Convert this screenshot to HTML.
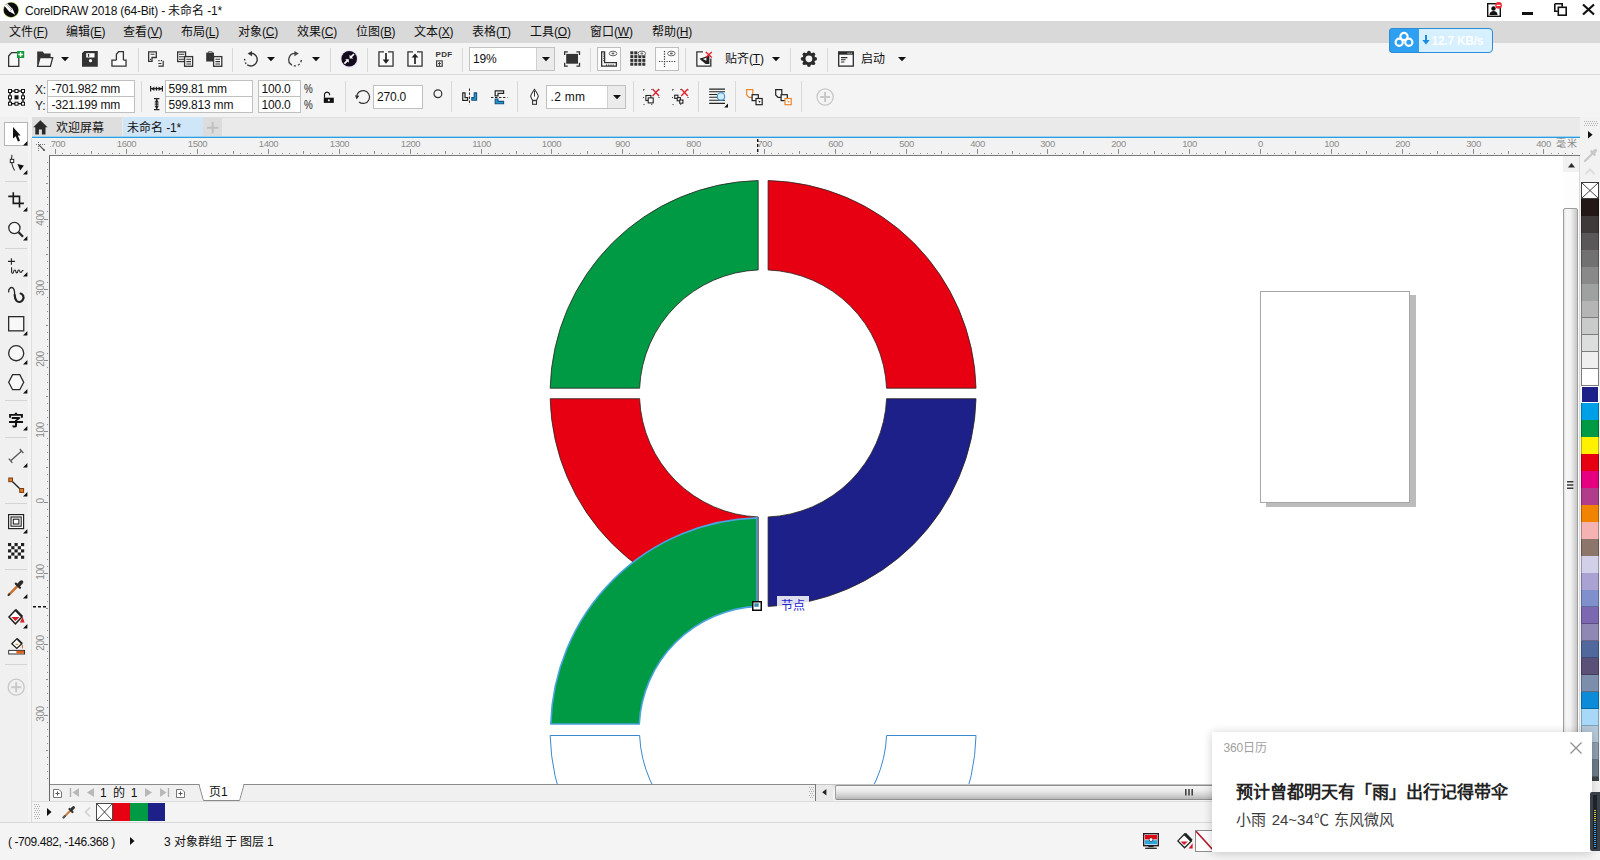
<!DOCTYPE html>
<html lang="zh-CN"><head><meta charset="utf-8"><title>CorelDRAW 2018 (64-Bit)</title>
<style>
*{box-sizing:border-box;margin:0;padding:0}
html,body{width:1600px;height:860px;overflow:hidden;background:#f4f4f4}
body{position:relative;font-family:"Liberation Sans",sans-serif;font-size:12px;color:#111;line-height:1;letter-spacing:-0.2px}
.a{position:absolute}
.t{position:absolute;white-space:nowrap;line-height:1}
.cj{display:inline-block;white-space:nowrap;letter-spacing:0}
u{text-decoration:underline;text-underline-offset:1px}
.sep{position:absolute;width:1px;background:#d9d9d9}
.fld{position:absolute;background:#fff;border:1px solid #c6c6c6}
svg{position:absolute;overflow:visible}
</style></head>
<body>
<div class="a" style="left:0px;top:117px;width:32px;height:706px;background:#f0f0f0"></div><div class="a" style="left:28px;top:117px;width:4px;height:706px;background:#f4f4f4"></div><div class="a" style="left:4px;top:122px;width:24px;height:24px;background:#fff;border:1px solid #b4b4b4"></div><svg style="left:12.8px;top:126.8px" width="8" height="15" viewBox="0 0 8 15"><path d="M0 0V11.6L2.7 9.2L4.9 14.6L7 13.7L4.8 8.5H7.6Z" fill="#111"/></svg><svg style="left:22.6px;top:140.6px" width="4.4" height="4.4" viewBox="0 0 4.4 4.4"><path d="M4.4 0V4.4H0Z" fill="#111"/></svg><svg style="left:9px;top:154px" width="16" height="18" viewBox="0 0 16 18"><path d="M3 0.8C1.8 6 3 12 5.6 16.6" fill="none" stroke="#333" stroke-width="1.1"/><rect x="1.3" y="5.3" width="3.4" height="3.3" fill="#fff" stroke="#222" stroke-width="1"/><path d="M8.4 10L14.9 11.4L11.2 16.6Z" fill="#111"/></svg><svg style="left:22.6px;top:169.6px" width="4.4" height="4.4" viewBox="0 0 4.4 4.4"><path d="M4.4 0V4.4H0Z" fill="#111"/></svg><div class="a" style="left:5px;top:181px;width:22px;height:1px;background:#d4d4d4"></div><svg style="left:8px;top:192px" width="16" height="16" viewBox="0 0 16 16"><path d="M5.3 0.2V11.4H15.9M0.3 4.4H11.5V15.6" fill="none" stroke="#1a1a1a" stroke-width="1.6"/></svg><svg style="left:22.6px;top:206.6px" width="4.4" height="4.4" viewBox="0 0 4.4 4.4"><path d="M4.4 0V4.4H0Z" fill="#111"/></svg><svg style="left:8px;top:221px" width="17" height="17" viewBox="0 0 17 17"><circle cx="6.4" cy="7" r="5.6" fill="#f8f8f8" stroke="#2b2b2b" stroke-width="1.3"/><path d="M10.6 11.2L15 15.8" stroke="#222" stroke-width="2.2"/></svg><svg style="left:22.6px;top:235.6px" width="4.4" height="4.4" viewBox="0 0 4.4 4.4"><path d="M4.4 0V4.4H0Z" fill="#111"/></svg><div class="a" style="left:5px;top:248px;width:22px;height:1px;background:#d4d4d4"></div><svg style="left:7px;top:258px" width="18" height="16" viewBox="0 0 18 16"><path d="M4.4 0.2V6.7M1 3.4H8" stroke="#222" stroke-width="1.1"/><path d="M4.6 9.3V13.6C4.6 15.8 6.4 15.8 6.6 13.8C6.8 11.4 8.6 11.4 8.8 13.4C9 15.4 10.6 15.4 10.8 13.4C11 11.6 12.6 11.6 12.8 13.2C13 14.8 14.6 14.8 15 13.2C15.2 12.4 15.8 12.2 16.4 12.8" fill="none" stroke="#222" stroke-width="1.1"/></svg><svg style="left:22.6px;top:272.4px" width="4.4" height="4.4" viewBox="0 0 4.4 4.4"><path d="M4.4 0V4.4H0Z" fill="#111"/></svg><svg style="left:8px;top:286px" width="17" height="18" viewBox="0 0 17 18"><path d="M0.7 5.8C0.2 2.6 3 0.5 5 2C7.4 3.9 6.2 8.6 7 12" fill="none" stroke="#222" stroke-width="1.3" stroke-linecap="round"/><path d="M6.6 9C6.8 11 7.2 13 8.4 14.6C10.2 16.8 13.6 16.4 15 13.6C16.3 11 14.9 8 12.6 7.5" fill="none" stroke="#222" stroke-width="2.2" stroke-linecap="round"/></svg><svg style="left:7.8px;top:316.2px" width="16.4" height="15.5" viewBox="0 0 16.4 15.5"><rect x="0.65" y="0.65" width="15.1" height="14.2" fill="#f8f8f8" stroke="#2b2b2b" stroke-width="1.3"/></svg><svg style="left:22.6px;top:330.6px" width="4.4" height="4.4" viewBox="0 0 4.4 4.4"><path d="M4.4 0V4.4H0Z" fill="#111"/></svg><svg style="left:7.8px;top:344.8px" width="16.4" height="16.4" viewBox="0 0 16.4 16.4"><circle cx="8.2" cy="8.2" r="7.55" fill="#f8f8f8" stroke="#2b2b2b" stroke-width="1.3"/></svg><svg style="left:22.6px;top:359.6px" width="4.4" height="4.4" viewBox="0 0 4.4 4.4"><path d="M4.4 0V4.4H0Z" fill="#111"/></svg><svg style="left:7.8px;top:373.9px" width="16.4" height="16.4" viewBox="0 0 16.4 16.4"><path d="M4.6 0.7H11.8L15.7 8.2L11.8 15.7H4.6L0.7 8.2Z" fill="#f8f8f8" stroke="#2b2b2b" stroke-width="1.3"/></svg><svg style="left:22.6px;top:388.6px" width="4.4" height="4.4" viewBox="0 0 4.4 4.4"><path d="M4.4 0V4.4H0Z" fill="#111"/></svg><div class="a" style="left:5px;top:400px;width:22px;height:1px;background:#d4d4d4"></div><svg style="left:8.2px;top:411.5px" width="16" height="16" viewBox="0 0 16 16"><path d="M7 8.2V9.1H1V10.9H7V13.3C7 13.5 6.9 13.6 6.5 13.6C6.2 13.6 5 13.6 4 13.5C4.4 14 4.7 14.9 4.9 15.5C6.2 15.5 7.2 15.5 8 15.2C8.8 14.9 9 14.4 9 13.3V10.9H15V9.1H9V8.8C10.4 8 11.6 7 12.6 6L11.3 5L10.8 5.1H3.7V6.9H8.9C8.3 7.4 7.6 7.9 7 8.2ZM6.5 0.9C6.7 1.2 6.9 1.6 7.1 2H1.1V5.7H3V3.8H12.9V5.7H14.9V2H9.4C9.1 1.5 8.8 0.8 8.4 0.4Z" fill="#111"/></svg><svg style="left:22.6px;top:425.6px" width="4.4" height="4.4" viewBox="0 0 4.4 4.4"><path d="M4.4 0V4.4H0Z" fill="#111"/></svg><div class="a" style="left:5px;top:437px;width:22px;height:1px;background:#d4d4d4"></div><svg style="left:8px;top:448px" width="17" height="17" viewBox="0 0 17 17"><path d="M2.6 12.8L13.6 3" stroke="#555" stroke-width="1.2"/><path d="M0.8 10.6L4.4 14.8M11.8 1L15.4 5.2" stroke="#555" stroke-width="1.3"/></svg><svg style="left:22.6px;top:462.6px" width="4.4" height="4.4" viewBox="0 0 4.4 4.4"><path d="M4.4 0V4.4H0Z" fill="#111"/></svg><svg style="left:8px;top:477px" width="17" height="17" viewBox="0 0 17 17"><path d="M2.6 2.8L13.6 13.4" stroke="#222" stroke-width="1.4"/><rect x="0.8" y="1" width="3.7" height="3.7" fill="#e07b2c" stroke="#7a3c10" stroke-width="1"/><rect x="11.7" y="11.5" width="3.9" height="3.9" fill="#e07b2c" stroke="#7a3c10" stroke-width="1"/></svg><svg style="left:22.6px;top:491.6px" width="4.4" height="4.4" viewBox="0 0 4.4 4.4"><path d="M4.4 0V4.4H0Z" fill="#111"/></svg><div class="a" style="left:5px;top:503px;width:22px;height:1px;background:#d4d4d4"></div><svg style="left:7.9px;top:514.2px" width="16.2" height="15.2" viewBox="0 0 16.2 15.2"><rect x="0.6" y="0.6" width="15" height="14" fill="#fff" stroke="#222" stroke-width="1.2"/><rect x="3" y="3" width="10.2" height="9.2" fill="#fff" stroke="#222" stroke-width="1.1"/><rect x="5.3" y="5.2" width="5.6" height="4.8" fill="#fff" stroke="#222" stroke-width="1.1"/></svg><svg style="left:22.6px;top:528.6px" width="4.4" height="4.4" viewBox="0 0 4.4 4.4"><path d="M4.4 0V4.4H0Z" fill="#111"/></svg><svg style="left:7.9px;top:543.3px" width="16.2" height="15.8" viewBox="0 0 16.2 15.8"><rect x="0" y="0" width="16.2" height="15.8" fill="#fff"/><rect x="0" y="0" width="3.24" height="3.16" fill="#222"/><rect x="0" y="6.32" width="3.24" height="3.16" fill="#222"/><rect x="0" y="12.64" width="3.24" height="3.16" fill="#222"/><rect x="3.24" y="3.16" width="3.24" height="3.16" fill="#222"/><rect x="3.24" y="9.48" width="3.24" height="3.16" fill="#222"/><rect x="6.48" y="0" width="3.24" height="3.16" fill="#222"/><rect x="6.48" y="6.32" width="3.24" height="3.16" fill="#222"/><rect x="6.48" y="12.64" width="3.24" height="3.16" fill="#222"/><rect x="9.72" y="3.16" width="3.24" height="3.16" fill="#222"/><rect x="9.72" y="9.48" width="3.24" height="3.16" fill="#222"/><rect x="12.96" y="0" width="3.24" height="3.16" fill="#222"/><rect x="12.96" y="6.32" width="3.24" height="3.16" fill="#222"/><rect x="12.96" y="12.64" width="3.24" height="3.16" fill="#222"/></svg><div class="a" style="left:5px;top:569px;width:22px;height:1px;background:#d4d4d4"></div><svg style="left:7px;top:579px" width="18" height="18" viewBox="0 0 18 18"><path d="M2 15.6L10 7.6" stroke="#c8702c" stroke-width="2.4" stroke-linecap="round"/><path d="M1.4 16.2L2.4 15.2" stroke="#333" stroke-width="1.8" stroke-linecap="round"/><path d="M8.8 4.6L13 8.8" stroke="#2a2a2a" stroke-width="2.2" stroke-linecap="round"/><path d="M12 5.6L14.4 3.2" stroke="#2a2a2a" stroke-width="3.8" stroke-linecap="round"/></svg><svg style="left:22.6px;top:594.1px" width="4.4" height="4.4" viewBox="0 0 4.4 4.4"><path d="M4.4 0V4.4H0Z" fill="#111"/></svg><svg style="left:8px;top:609px" width="18" height="18" viewBox="0 0 18 18"><path d="M7.4 1.2L13.8 8L7.4 14.8L1 8Z" fill="#fff" stroke="#222" stroke-width="1.5"/><path d="M7.6 0.8L14.4 7.6" stroke="#222" stroke-width="2"/><path d="M3.2 8H11.6L7.4 12Z" fill="#d8202c"/><path d="M14.6 7.8L12 13.4H16.6Z" fill="#d8202c"/></svg><svg style="left:22.6px;top:623.6px" width="4.4" height="4.4" viewBox="0 0 4.4 4.4"><path d="M4.4 0V4.4H0Z" fill="#111"/></svg><svg style="left:7.5px;top:637.5px" width="17" height="17" viewBox="0 0 17 17"><path d="M8.8 0.9L13.8 5.8L8.8 10.4L3.8 5.8Z" fill="#fff" stroke="#222" stroke-width="1.3"/><path d="M9 0.6L14.2 5.6" stroke="#222" stroke-width="1.6"/><path d="M6.6 5.8H11L9 7.6Z" fill="#c8a040"/><path d="M14.4 7V10.4" stroke="#d06020" stroke-width="1"/><rect x="0.7" y="12.4" width="15.8" height="3.6" fill="#fff" stroke="#333" stroke-width="1"/><rect x="8.4" y="12.9" width="7.6" height="2.6" fill="#e0601c"/></svg><div class="a" style="left:5px;top:664px;width:22px;height:1px;background:#d4d4d4"></div><svg style="left:6.8px;top:678.3px" width="19" height="19" viewBox="0 0 19 19"><circle cx="9.2" cy="9.2" r="8" fill="none" stroke="#c8c8c8" stroke-width="1.3"/><path d="M9.2 4.2V14.2M4.2 9.2H14.2" stroke="#c8c8c8" stroke-width="2"/></svg>
<div class="a" style="left:49px;top:155px;width:1514px;height:629px;background:#fff;border-left:1px solid #666;border-top:1px solid #787878"></div><svg style="left:50px;top:156px;overflow:hidden" width="1513" height="628" viewBox="50 156 1513 628"><rect x="1266" y="295" width="150" height="212" fill="#bcbcbc"/><rect x="1260.5" y="291.5" width="149" height="211" fill="#fff" stroke="#a6a6a6" stroke-width="1"/><path d="M550.16 388.20 A213 213 0 0 1 758.20 180.51 L758.20 269.95 A123.6 123.6 0 0 0 639.61 388.20 Z" fill="#009944" stroke="#2a2320" stroke-width="0.8"/><path d="M976.04 388.20 A213 213 0 0 0 768.10 180.51 L768.10 269.95 A123.6 123.6 0 0 1 886.59 388.20 Z" fill="#e60012" stroke="#2a2320" stroke-width="0.8"/><path d="M550.16 398.70 A213 213 0 0 0 758.20 606.39 L758.20 516.95 A123.6 123.6 0 0 1 639.61 398.70 Z" fill="#e60012" stroke="#2a2320" stroke-width="0.8"/><path d="M976.04 398.70 A213 213 0 0 1 768.10 606.39 L768.10 516.95 A123.6 123.6 0 0 0 886.59 398.70 Z" fill="#1d2088" stroke="#2a2320" stroke-width="0.8"/><path d="M550.79 724.00 A212.4 212.4 0 0 1 757.00 517.89 L757.00 606.35 A124 124 0 0 0 639.26 724.00 Z" fill="#009944" stroke="#4aa3dc" stroke-width="1.6"/><path d="M550.17 735.50 A213 213 0 0 0 758.20 943.14 L758.20 853.70 A123.6 123.6 0 0 1 639.61 735.50 Z" fill="none" stroke="#3b88cc" stroke-width="1"/><path d="M976.03 735.50 A213 213 0 0 1 768.10 943.14 L768.10 853.70 A123.6 123.6 0 0 0 886.59 735.50 Z" fill="none" stroke="#3b88cc" stroke-width="1"/><rect x="752.75" y="601.75" width="8.5" height="8.5" fill="#fff" stroke="#0a0a0a" stroke-width="1.5"/><rect x="754.3" y="603.3" width="4.4" height="3.5" fill="#3a8cb0"/></svg><div class="a" style="left:777px;top:596px;width:32px;height:15px;background:rgba(255,255,255,.85)"></div><div class="t" style="left:780.5px;top:599.5px;font-size:12px;color:#2323d6;"><span class="cj" style="width:24px">节点</span></div>
<div class="a" style="left:32px;top:138px;width:1548px;height:17px;background:#f2f2f2"></div><svg style="left:0px;top:0px" width="1600" height="160" viewBox="0 0 1600 160"><path d="M55.5 149V154M62.5 153V154M70.5 153V154M77.5 153V154M84.5 153V154M91.5 151V154M98.5 153V154M105.5 153V154M112.5 153V154M119.5 153V154M126.5 149V154M133.5 153V154M140.5 153V154M147.5 153V154M155.5 153V154M162.5 151V154M169.5 153V154M176.5 153V154M183.5 153V154M190.5 153V154M197.5 149V154M204.5 153V154M211.5 153V154M218.5 153V154M225.5 153V154M233.5 151V154M240.5 153V154M247.5 153V154M254.5 153V154M261.5 153V154M268.5 149V154M275.5 153V154M282.5 153V154M289.5 153V154M296.5 153V154M303.5 151V154M310.5 153V154M318.5 153V154M325.5 153V154M332.5 153V154M339.5 149V154M346.5 153V154M353.5 153V154M360.5 153V154M367.5 153V154M374.5 151V154M381.5 153V154M388.5 153V154M396.5 153V154M403.5 153V154M410.5 149V154M417.5 153V154M424.5 153V154M431.5 153V154M438.5 153V154M445.5 151V154M452.5 153V154M459.5 153V154M466.5 153V154M473.5 153V154M481.5 149V154M488.5 153V154M495.5 153V154M502.5 153V154M509.5 153V154M516.5 151V154M523.5 153V154M530.5 153V154M537.5 153V154M544.5 153V154M551.5 149V154M558.5 153V154M566.5 153V154M573.5 153V154M580.5 153V154M587.5 151V154M594.5 153V154M601.5 153V154M608.5 153V154M615.5 153V154M622.5 149V154M629.5 153V154M636.5 153V154M644.5 153V154M651.5 153V154M658.5 151V154M665.5 153V154M672.5 153V154M679.5 153V154M686.5 153V154M693.5 149V154M700.5 153V154M707.5 153V154M714.5 153V154M721.5 153V154M729.5 151V154M736.5 153V154M743.5 153V154M750.5 153V154M757.5 153V154M764.5 149V154M771.5 153V154M778.5 153V154M785.5 153V154M792.5 153V154M799.5 151V154M806.5 153V154M814.5 153V154M821.5 153V154M828.5 153V154M835.5 149V154M842.5 153V154M849.5 153V154M856.5 153V154M863.5 153V154M870.5 151V154M877.5 153V154M884.5 153V154M892.5 153V154M899.5 153V154M906.5 149V154M913.5 153V154M920.5 153V154M927.5 153V154M934.5 153V154M941.5 151V154M948.5 153V154M955.5 153V154M962.5 153V154M969.5 153V154M977.5 149V154M984.5 153V154M991.5 153V154M998.5 153V154M1005.5 153V154M1012.5 151V154M1019.5 153V154M1026.5 153V154M1033.5 153V154M1040.5 153V154M1047.5 149V154M1055.5 153V154M1062.5 153V154M1069.5 153V154M1076.5 153V154M1083.5 151V154M1090.5 153V154M1097.5 153V154M1104.5 153V154M1111.5 153V154M1118.5 149V154M1125.5 153V154M1132.5 153V154M1140.5 153V154M1147.5 153V154M1154.5 151V154M1161.5 153V154M1168.5 153V154M1175.5 153V154M1182.5 153V154M1189.5 149V154M1196.5 153V154M1203.5 153V154M1210.5 153V154M1217.5 153V154M1225.5 151V154M1232.5 153V154M1239.5 153V154M1246.5 153V154M1253.5 153V154M1260.5 149V154M1267.5 153V154M1274.5 153V154M1281.5 153V154M1288.5 153V154M1295.5 151V154M1303.5 153V154M1310.5 153V154M1317.5 153V154M1324.5 153V154M1331.5 149V154M1338.5 153V154M1345.5 153V154M1352.5 153V154M1359.5 153V154M1366.5 151V154M1373.5 153V154M1380.5 153V154M1388.5 153V154M1395.5 153V154M1402.5 149V154M1409.5 153V154M1416.5 153V154M1423.5 153V154M1430.5 153V154M1437.5 151V154M1444.5 153V154M1451.5 153V154M1458.5 153V154M1465.5 153V154M1473.5 149V154M1480.5 153V154M1487.5 153V154M1494.5 153V154M1501.5 153V154M1508.5 151V154M1515.5 153V154M1522.5 153V154M1529.5 153V154M1536.5 153V154M1543.5 149V154M1551.5 153V154M1558.5 153V154M1565.5 153V154M1572.5 153V154" stroke="#8c8c8c" stroke-width="1" fill="none" shape-rendering="crispEdges"/></svg><div class="a" style="left:50px;top:138px;width:1530px;height:17px;overflow:hidden"><div class="a" style="left:-50px;top:-138px"><div class="t" style="left:35.5px;top:139px;width:40px;text-align:center;font-size:9.5px;color:#8c8c8c;letter-spacing:-0.45px">1700</div><div class="t" style="left:106.5px;top:139px;width:40px;text-align:center;font-size:9.5px;color:#8c8c8c;letter-spacing:-0.45px">1600</div><div class="t" style="left:177.5px;top:139px;width:40px;text-align:center;font-size:9.5px;color:#8c8c8c;letter-spacing:-0.45px">1500</div><div class="t" style="left:248.5px;top:139px;width:40px;text-align:center;font-size:9.5px;color:#8c8c8c;letter-spacing:-0.45px">1400</div><div class="t" style="left:319.5px;top:139px;width:40px;text-align:center;font-size:9.5px;color:#8c8c8c;letter-spacing:-0.45px">1300</div><div class="t" style="left:390.5px;top:139px;width:40px;text-align:center;font-size:9.5px;color:#8c8c8c;letter-spacing:-0.45px">1200</div><div class="t" style="left:461.5px;top:139px;width:40px;text-align:center;font-size:9.5px;color:#8c8c8c;letter-spacing:-0.45px">1100</div><div class="t" style="left:531.5px;top:139px;width:40px;text-align:center;font-size:9.5px;color:#8c8c8c;letter-spacing:-0.45px">1000</div><div class="t" style="left:602.5px;top:139px;width:40px;text-align:center;font-size:9.5px;color:#8c8c8c;letter-spacing:-0.45px">900</div><div class="t" style="left:673.5px;top:139px;width:40px;text-align:center;font-size:9.5px;color:#8c8c8c;letter-spacing:-0.45px">800</div><div class="t" style="left:744.5px;top:139px;width:40px;text-align:center;font-size:9.5px;color:#8c8c8c;letter-spacing:-0.45px">700</div><div class="t" style="left:815.5px;top:139px;width:40px;text-align:center;font-size:9.5px;color:#8c8c8c;letter-spacing:-0.45px">600</div><div class="t" style="left:886.5px;top:139px;width:40px;text-align:center;font-size:9.5px;color:#8c8c8c;letter-spacing:-0.45px">500</div><div class="t" style="left:957.5px;top:139px;width:40px;text-align:center;font-size:9.5px;color:#8c8c8c;letter-spacing:-0.45px">400</div><div class="t" style="left:1027.5px;top:139px;width:40px;text-align:center;font-size:9.5px;color:#8c8c8c;letter-spacing:-0.45px">300</div><div class="t" style="left:1098.5px;top:139px;width:40px;text-align:center;font-size:9.5px;color:#8c8c8c;letter-spacing:-0.45px">200</div><div class="t" style="left:1169.5px;top:139px;width:40px;text-align:center;font-size:9.5px;color:#8c8c8c;letter-spacing:-0.45px">100</div><div class="t" style="left:1240.5px;top:139px;width:40px;text-align:center;font-size:9.5px;color:#8c8c8c;letter-spacing:-0.45px">0</div><div class="t" style="left:1311.5px;top:139px;width:40px;text-align:center;font-size:9.5px;color:#8c8c8c;letter-spacing:-0.45px">100</div><div class="t" style="left:1382.5px;top:139px;width:40px;text-align:center;font-size:9.5px;color:#8c8c8c;letter-spacing:-0.45px">200</div><div class="t" style="left:1453.5px;top:139px;width:40px;text-align:center;font-size:9.5px;color:#8c8c8c;letter-spacing:-0.45px">300</div><div class="t" style="left:1523.5px;top:139px;width:40px;text-align:center;font-size:9.5px;color:#8c8c8c;letter-spacing:-0.45px">400</div></div></div><svg style="left:757px;top:139px" width="2" height="15" viewBox="0 0 2 15"><path d="M0.7 0V15" stroke="#111" stroke-width="1.4" stroke-dasharray="3 2"/></svg><div class="t" style="left:1556px;top:139px;font-size:10px;color:#8c8c8c;"><span class="cj" style="width:22px;letter-spacing:1px">毫米</span></div>
<div class="a" style="left:32px;top:155px;width:17px;height:629px;background:#f2f2f2"></div><svg style="left:0px;top:0px" width="60" height="802" viewBox="0 0 60 802"><path d="M47 162.5H48M47 169.5H48M47 176.5H48M46 183.5H48M47 190.5H48M47 197.5H48M47 204.5H48M47 211.5H48M44 219.5H48M47 226.5H48M47 233.5H48M47 240.5H48M47 247.5H48M46 254.5H48M47 261.5H48M47 268.5H48M47 275.5H48M47 282.5H48M44 289.5H48M47 297.5H48M47 304.5H48M47 311.5H48M47 318.5H48M46 325.5H48M47 332.5H48M47 339.5H48M47 346.5H48M47 353.5H48M44 360.5H48M47 367.5H48M47 374.5H48M47 382.5H48M47 389.5H48M46 396.5H48M47 403.5H48M47 410.5H48M47 417.5H48M47 424.5H48M44 431.5H48M47 438.5H48M47 445.5H48M47 452.5H48M47 459.5H48M46 467.5H48M47 474.5H48M47 481.5H48M47 488.5H48M47 495.5H48M44 502.5H48M47 509.5H48M47 516.5H48M47 523.5H48M47 530.5H48M46 537.5H48M47 545.5H48M47 552.5H48M47 559.5H48M47 566.5H48M44 573.5H48M47 580.5H48M47 587.5H48M47 594.5H48M47 601.5H48M46 608.5H48M47 615.5H48M47 622.5H48M47 630.5H48M47 637.5H48M44 644.5H48M47 651.5H48M47 658.5H48M47 665.5H48M47 672.5H48M46 679.5H48M47 686.5H48M47 693.5H48M47 700.5H48M47 707.5H48M44 715.5H48M47 722.5H48M47 729.5H48M47 736.5H48M47 743.5H48M46 750.5H48M47 757.5H48M47 764.5H48M47 771.5H48M47 778.5H48M44 785.5H48M47 793.5H48" stroke="#8c8c8c" stroke-width="1" fill="none" shape-rendering="crispEdges"/></svg><div class="a" style="left:31px;top:138px;width:1px;height:663px;background:#dedede"></div><svg style="left:33px;top:606px" width="15" height="2" viewBox="0 0 15 2"><path d="M0 0.7H15" stroke="#111" stroke-width="1.4" stroke-dasharray="3 2"/></svg><div class="a" style="left:32px;top:156px;width:18px;height:628px;overflow:hidden"><div class="a" style="left:-32px;top:-156px"><div class="t" style="left:20.5px;top:212.5px;width:40px;height:10px;text-align:center;font-size:10px;color:#8c8c8c;letter-spacing:-0.45px;transform:rotate(-90deg)">400</div><div class="t" style="left:20.5px;top:282.5px;width:40px;height:10px;text-align:center;font-size:10px;color:#8c8c8c;letter-spacing:-0.45px;transform:rotate(-90deg)">300</div><div class="t" style="left:20.5px;top:353.5px;width:40px;height:10px;text-align:center;font-size:10px;color:#8c8c8c;letter-spacing:-0.45px;transform:rotate(-90deg)">200</div><div class="t" style="left:20.5px;top:424.5px;width:40px;height:10px;text-align:center;font-size:10px;color:#8c8c8c;letter-spacing:-0.45px;transform:rotate(-90deg)">100</div><div class="t" style="left:20.5px;top:495.5px;width:40px;height:10px;text-align:center;font-size:10px;color:#8c8c8c;letter-spacing:-0.45px;transform:rotate(-90deg)">0</div><div class="t" style="left:20.5px;top:566.5px;width:40px;height:10px;text-align:center;font-size:10px;color:#8c8c8c;letter-spacing:-0.45px;transform:rotate(-90deg)">100</div><div class="t" style="left:20.5px;top:637.5px;width:40px;height:10px;text-align:center;font-size:10px;color:#8c8c8c;letter-spacing:-0.45px;transform:rotate(-90deg)">200</div><div class="t" style="left:20.5px;top:708.5px;width:40px;height:10px;text-align:center;font-size:10px;color:#8c8c8c;letter-spacing:-0.45px;transform:rotate(-90deg)">300</div></div></div>
<div class="a" style="left:1563px;top:155px;width:17px;height:629px;background:#fdfdfd;border-top:1px solid #787878"></div><div class="a" style="left:1579px;top:156px;width:1px;height:628px;background:#dadada"></div><div class="a" style="left:1563px;top:156px;width:16px;height:16px;background:#f1f1f1"></div><svg style="left:1568px;top:163px" width="7" height="4.4" viewBox="0 0 7 4.4"><path d="M0 4.4L3.5 0L7 4.4Z" fill="#2a2a2a"/></svg><div class="a" style="left:1563px;top:208px;width:15px;height:556px;background:linear-gradient(90deg,#e4e4e4 0,#f6f6f6 20%,#f2f2f2 50%,#d8d8d8 80%,#c6c6c6 100%);border:1px solid #9c9c9c;border-radius:2px"></div><svg style="left:1567px;top:481px" width="6.4" height="8" viewBox="0 0 6.4 8"><path d="M0 0.8H6.4M0 4H6.4M0 7.2H6.4" stroke="#3a3a3a" stroke-width="1.5"/></svg>
<div class="a" style="left:1580px;top:117px;width:20px;height:706px;background:#f2f2f2"></div><div class="a" style="left:1581px;top:182px;width:18px;height:17px;background:#fff;border:1px solid #3c3c3c"></div><svg style="left:1581px;top:182px" width="18" height="17" viewBox="0 0 18 17"><path d="M1 1L17 16M17 1L1 16" stroke="#2a2a2a" stroke-width="0.9" fill="none"/></svg><div class="a" style="left:1581px;top:199px;width:18px;height:17px;background:#231815;border-left:1px solid rgba(0,0,0,.28);border-right:1px solid rgba(0,0,0,.28)"></div><div class="a" style="left:1581px;top:216px;width:18px;height:17px;background:#3e3a39;border-left:1px solid rgba(0,0,0,.28);border-right:1px solid rgba(0,0,0,.28)"></div><div class="a" style="left:1581px;top:233px;width:18px;height:17px;background:#595757;border-left:1px solid rgba(0,0,0,.28);border-right:1px solid rgba(0,0,0,.28)"></div><div class="a" style="left:1581px;top:250px;width:18px;height:17px;background:#727171;border-left:1px solid rgba(0,0,0,.28);border-right:1px solid rgba(0,0,0,.28)"></div><div class="a" style="left:1581px;top:267px;width:18px;height:17px;background:#898989;border-left:1px solid rgba(0,0,0,.28);border-right:1px solid rgba(0,0,0,.28)"></div><div class="a" style="left:1581px;top:284px;width:18px;height:17px;background:#9fa0a0;border-left:1px solid rgba(0,0,0,.28);border-right:1px solid rgba(0,0,0,.28)"></div><div class="a" style="left:1581px;top:301px;width:18px;height:17px;background:#b5b5b6;border:1px solid #7c7c7c;border-top:0"></div><div class="a" style="left:1581px;top:318px;width:18px;height:17px;background:#c9caca;border:1px solid #7c7c7c;border-top:0"></div><div class="a" style="left:1581px;top:335px;width:18px;height:17px;background:#dcdddd;border:1px solid #7c7c7c;border-top:0"></div><div class="a" style="left:1581px;top:352px;width:18px;height:17px;background:#efefef;border:1px solid #7c7c7c;border-top:0"></div><div class="a" style="left:1581px;top:369px;width:18px;height:17px;background:#ffffff;border:1px solid #7c7c7c;border-top:0"></div><div class="a" style="left:1581px;top:386px;width:18px;height:17px;background:#1d2088;border:1px solid #fff"></div><div class="a" style="left:1581px;top:403px;width:18px;height:17px;background:#00a0e9;border-left:1px solid rgba(0,0,0,.28);border-right:1px solid rgba(0,0,0,.28)"></div><div class="a" style="left:1581px;top:420px;width:18px;height:17px;background:#009944;border-left:1px solid rgba(0,0,0,.28);border-right:1px solid rgba(0,0,0,.28)"></div><div class="a" style="left:1581px;top:437px;width:18px;height:17px;background:#fff100;border-left:1px solid rgba(0,0,0,.28);border-right:1px solid rgba(0,0,0,.28)"></div><div class="a" style="left:1581px;top:454px;width:18px;height:17px;background:#e60012;border-left:1px solid rgba(0,0,0,.28);border-right:1px solid rgba(0,0,0,.28)"></div><div class="a" style="left:1581px;top:471px;width:18px;height:17px;background:#e4007f;border-left:1px solid rgba(0,0,0,.28);border-right:1px solid rgba(0,0,0,.28)"></div><div class="a" style="left:1581px;top:488px;width:18px;height:17px;background:#b23c8c;border-left:1px solid rgba(0,0,0,.28);border-right:1px solid rgba(0,0,0,.28)"></div><div class="a" style="left:1581px;top:505px;width:18px;height:17px;background:#f08300;border-left:1px solid rgba(0,0,0,.28);border-right:1px solid rgba(0,0,0,.28)"></div><div class="a" style="left:1581px;top:522px;width:18px;height:17px;background:#f5b2b2;border-left:1px solid rgba(0,0,0,.28);border-right:1px solid rgba(0,0,0,.28)"></div><div class="a" style="left:1581px;top:539px;width:18px;height:17px;background:#8c766c;border-left:1px solid rgba(0,0,0,.28);border-right:1px solid rgba(0,0,0,.28)"></div><div class="a" style="left:1581px;top:556px;width:18px;height:17px;background:#d2cfe8;border-left:1px solid rgba(0,0,0,.28);border-right:1px solid rgba(0,0,0,.28)"></div><div class="a" style="left:1581px;top:573px;width:18px;height:17px;background:#aaa2d2;border-left:1px solid rgba(0,0,0,.28);border-right:1px solid rgba(0,0,0,.28)"></div><div class="a" style="left:1581px;top:590px;width:18px;height:17px;background:#7f90cc;border:1px solid rgba(0,0,0,.25);border-top:0"></div><div class="a" style="left:1581px;top:607px;width:18px;height:17px;background:#7b68b0;border:1px solid rgba(0,0,0,.25);border-top:0"></div><div class="a" style="left:1581px;top:624px;width:18px;height:17px;background:#9088b4;border:1px solid rgba(0,0,0,.25);border-top:0"></div><div class="a" style="left:1581px;top:641px;width:18px;height:17px;background:#50689c;border:1px solid rgba(0,0,0,.25);border-top:0"></div><div class="a" style="left:1581px;top:658px;width:18px;height:17px;background:#5a5078;border:1px solid rgba(0,0,0,.25);border-top:0"></div><div class="a" style="left:1581px;top:675px;width:18px;height:17px;background:#7c8eac;border:1px solid rgba(0,0,0,.25);border-top:0"></div><div class="a" style="left:1581px;top:692px;width:18px;height:17px;background:#0c8cd8;border:1px solid rgba(0,0,0,.25);border-top:0"></div><div class="a" style="left:1581px;top:709px;width:18px;height:17px;background:#a8d8f8;border:1px solid rgba(0,0,0,.25);border-top:0"></div><div class="a" style="left:1581px;top:726px;width:18px;height:17px;background:#b4c8d8;border:1px solid rgba(0,0,0,.25);border-top:0"></div><div class="a" style="left:1581px;top:743px;width:18px;height:17px;background:#8e9fb0;border:1px solid rgba(0,0,0,.25);border-top:0"></div><div class="a" style="left:1581px;top:760px;width:18px;height:17px;background:#6c7c88;border:1px solid rgba(0,0,0,.25);border-top:0"></div><div class="a" style="left:1581px;top:777px;width:18px;height:4px;background:#3c4448"></div><svg style="left:1584px;top:121px" width="14" height="6" viewBox="0 0 14 6"><rect x="0" y="0" width="1" height="1" fill="#b0b0b0"/><rect x="2" y="0" width="1" height="1" fill="#b0b0b0"/><rect x="4" y="0" width="1" height="1" fill="#b0b0b0"/><rect x="6" y="0" width="1" height="1" fill="#b0b0b0"/><rect x="8" y="0" width="1" height="1" fill="#b0b0b0"/><rect x="10" y="0" width="1" height="1" fill="#b0b0b0"/><rect x="12" y="0" width="1" height="1" fill="#b0b0b0"/><rect x="1" y="2" width="1" height="1" fill="#b0b0b0"/><rect x="3" y="2" width="1" height="1" fill="#b0b0b0"/><rect x="5" y="2" width="1" height="1" fill="#b0b0b0"/><rect x="7" y="2" width="1" height="1" fill="#b0b0b0"/><rect x="9" y="2" width="1" height="1" fill="#b0b0b0"/><rect x="11" y="2" width="1" height="1" fill="#b0b0b0"/><rect x="13" y="2" width="1" height="1" fill="#b0b0b0"/><rect x="0" y="4" width="1" height="1" fill="#b0b0b0"/><rect x="2" y="4" width="1" height="1" fill="#b0b0b0"/><rect x="4" y="4" width="1" height="1" fill="#b0b0b0"/><rect x="6" y="4" width="1" height="1" fill="#b0b0b0"/><rect x="8" y="4" width="1" height="1" fill="#b0b0b0"/><rect x="10" y="4" width="1" height="1" fill="#b0b0b0"/><rect x="12" y="4" width="1" height="1" fill="#b0b0b0"/></svg><svg style="left:1588px;top:131.3px" width="5" height="8" viewBox="0 0 5 8"><path d="M0 0L4.6 3.7L0 7.4Z" fill="#111"/></svg><svg style="left:1583px;top:148px" width="15" height="15" viewBox="0 0 15 15"><path d="M2 13L9 6" stroke="#c8c8c8" stroke-width="2.2" stroke-linecap="round" fill="none"/><path d="M8.5 3.5L11.5 6.5" stroke="#c8c8c8" stroke-width="2.6" stroke-linecap="round"/><path d="M10.5 4.5L12.5 2.5" stroke="#c8c8c8" stroke-width="3.2" stroke-linecap="round"/></svg><svg style="left:1584px;top:167px" width="12" height="8" viewBox="0 0 12 8"><path d="M1.5 7L6 2.5L10.5 7" stroke="#dedede" stroke-width="2" fill="none"/></svg>
<div class="a" style="left:32px;top:784px;width:17px;height:17px;background:#f2f2f2"></div><div class="a" style="left:49px;top:784px;width:1px;height:17px;background:#6a6a6a"></div><div class="a" style="left:50px;top:784px;width:1530px;height:17px;background:#f0f0f0;border-top:1px solid #c4c4c4"></div><div class="a" style="left:50px;top:784px;width:766px;height:1px;background:#8a8a8a"></div><div class="a" style="left:32px;top:801px;width:1568px;height:1px;background:#dcdcdc"></div><svg style="left:53px;top:787px" width="9" height="11" viewBox="0 0 9 11"><path d="M0.5 2.5H6L8.5 5V10.5H0.5Z" fill="#fff" stroke="#777" stroke-width="1"/><path d="M2.5 6.5H6.5M4.5 4.5V8.5" stroke="#555" stroke-width="1"/></svg><svg style="left:69px;top:788px" width="10" height="9" viewBox="0 0 10 9"><path d="M1.5 0V9" stroke="#b0b0b0" stroke-width="1.4"/><path d="M10 0L3.5 4.5L10 9Z" fill="#b8b8b8"/></svg><svg style="left:86px;top:788px" width="8" height="9" viewBox="0 0 8 9"><path d="M8 0L1 4.5L8 9Z" fill="#b8b8b8"/></svg><div class="t" style="left:100px;top:787px;font-size:12px;color:#111;">1 <span class="cj" style="width:12px;margin:0 3px">的</span> 1</div><svg style="left:145px;top:788px" width="8" height="9" viewBox="0 0 8 9"><path d="M0 0L7 4.5L0 9Z" fill="#b8b8b8"/></svg><svg style="left:160px;top:788px" width="10" height="9" viewBox="0 0 10 9"><path d="M8.5 0V9" stroke="#b0b0b0" stroke-width="1.4"/><path d="M0 0L6.5 4.5L0 9Z" fill="#b8b8b8"/></svg><svg style="left:176px;top:787px" width="9" height="11" viewBox="0 0 9 11"><path d="M0.5 2.5H6L8.5 5V10.5H0.5Z" fill="#fff" stroke="#777" stroke-width="1"/><path d="M2.5 6.5H6.5M4.5 4.5V8.5" stroke="#555" stroke-width="1"/></svg><svg style="left:196px;top:784px" width="52" height="18" viewBox="0 0 52 18"><path d="M0 0.5H3L7.5 16.5H43.5L48 0.5H52" fill="none" stroke="#8a8a8a" stroke-width="1"/><path d="M3.5 0L8 16H43L47.5 0Z" fill="#fff"/></svg><div class="t" style="left:209px;top:786px;font-size:12px;color:#111;"><span class="cj" style="width:12px">页</span>1</div><svg style="left:809px;top:787px" width="5" height="12" viewBox="0 0 5 12"><rect x="0" y="0" width="1" height="1" fill="#b0b0b0"/><rect x="2" y="0" width="1" height="1" fill="#b0b0b0"/><rect x="4" y="0" width="1" height="1" fill="#b0b0b0"/><rect x="1" y="2" width="1" height="1" fill="#b0b0b0"/><rect x="3" y="2" width="1" height="1" fill="#b0b0b0"/><rect x="0" y="4" width="1" height="1" fill="#b0b0b0"/><rect x="2" y="4" width="1" height="1" fill="#b0b0b0"/><rect x="4" y="4" width="1" height="1" fill="#b0b0b0"/><rect x="1" y="6" width="1" height="1" fill="#b0b0b0"/><rect x="3" y="6" width="1" height="1" fill="#b0b0b0"/><rect x="0" y="8" width="1" height="1" fill="#b0b0b0"/><rect x="2" y="8" width="1" height="1" fill="#b0b0b0"/><rect x="4" y="8" width="1" height="1" fill="#b0b0b0"/><rect x="1" y="10" width="1" height="1" fill="#b0b0b0"/><rect x="3" y="10" width="1" height="1" fill="#b0b0b0"/></svg><div class="a" style="left:815px;top:784px;width:1px;height:17px;background:#777"></div><div class="a" style="left:816px;top:785px;width:17px;height:16px;background:#e9e9e9"></div><svg style="left:821.8px;top:788.8px" width="4.4" height="6.4" viewBox="0 0 4.4 6.4"><path d="M4.4 0L0.2 3.2L4.4 6.4Z" fill="#222"/></svg><div class="a" style="left:833px;top:785px;width:747px;height:16px;background:linear-gradient(#dcdcdc,#f6f6f6 45%,#f2f2f2)"></div><div class="a" style="left:835px;top:785px;width:706px;height:15px;background:linear-gradient(#f6f6f6 0,#ececec 35%,#d2d2d2 72%,#b6b6b6 100%);border:1px solid #8e8e8e;border-left-color:#a0a0a0;border-radius:2px"></div><svg style="left:1185px;top:789px" width="8" height="6.4" viewBox="0 0 8 6.4"><path d="M0.8 0V6.4M4 0V6.4M7.2 0V6.4" stroke="#3a3a3a" stroke-width="1.5"/></svg><div class="a" style="left:31px;top:801px;width:1px;height:22px;background:#dcdcdc"></div><svg style="left:34px;top:804px" width="6" height="16" viewBox="0 0 6 16"><rect x="0" y="0" width="1" height="1" fill="#b0b0b0"/><rect x="2" y="0" width="1" height="1" fill="#b0b0b0"/><rect x="4" y="0" width="1" height="1" fill="#b0b0b0"/><rect x="1" y="2" width="1" height="1" fill="#b0b0b0"/><rect x="3" y="2" width="1" height="1" fill="#b0b0b0"/><rect x="5" y="2" width="1" height="1" fill="#b0b0b0"/><rect x="0" y="4" width="1" height="1" fill="#b0b0b0"/><rect x="2" y="4" width="1" height="1" fill="#b0b0b0"/><rect x="4" y="4" width="1" height="1" fill="#b0b0b0"/><rect x="1" y="6" width="1" height="1" fill="#b0b0b0"/><rect x="3" y="6" width="1" height="1" fill="#b0b0b0"/><rect x="5" y="6" width="1" height="1" fill="#b0b0b0"/><rect x="0" y="8" width="1" height="1" fill="#b0b0b0"/><rect x="2" y="8" width="1" height="1" fill="#b0b0b0"/><rect x="4" y="8" width="1" height="1" fill="#b0b0b0"/><rect x="1" y="10" width="1" height="1" fill="#b0b0b0"/><rect x="3" y="10" width="1" height="1" fill="#b0b0b0"/><rect x="5" y="10" width="1" height="1" fill="#b0b0b0"/><rect x="0" y="12" width="1" height="1" fill="#b0b0b0"/><rect x="2" y="12" width="1" height="1" fill="#b0b0b0"/><rect x="4" y="12" width="1" height="1" fill="#b0b0b0"/><rect x="1" y="14" width="1" height="1" fill="#b0b0b0"/><rect x="3" y="14" width="1" height="1" fill="#b0b0b0"/><rect x="5" y="14" width="1" height="1" fill="#b0b0b0"/></svg><svg style="left:47px;top:808px" width="5" height="8" viewBox="0 0 5 8"><path d="M0 0L4.5 4L0 8Z" fill="#111"/></svg><svg style="left:62px;top:805px" width="14" height="14" viewBox="0 0 14 14"><path d="M1.5 12.5L8 6" stroke="#c87a3c" stroke-width="2" stroke-linecap="round"/><path d="M1.5 12.5L3 11" stroke="#555" stroke-width="2" stroke-linecap="round"/><path d="M7.5 4L10.5 7" stroke="#333" stroke-width="2.2" stroke-linecap="round"/><path d="M9.5 4.5L11.5 2.5" stroke="#333" stroke-width="3" stroke-linecap="round"/></svg><svg style="left:84px;top:807px" width="7" height="10" viewBox="0 0 7 10"><path d="M6 0.5L1.5 5L6 9.5" stroke="#d0d0d0" stroke-width="1.6" fill="none"/></svg><div class="a" style="left:96px;top:803px;width:17px;height:18px;background:#fff;border:1px solid #4a4a4a"></div><svg style="left:96px;top:803px" width="17" height="18" viewBox="0 0 17 18"><path d="M1 1L16 17M16 1L1 17" stroke="#333" stroke-width="0.9" fill="none"/></svg><div class="a" style="left:113px;top:803px;width:17px;height:18px;background:#e60012"></div><div class="a" style="left:130px;top:803px;width:18px;height:18px;background:#009944"></div><div class="a" style="left:148px;top:803px;width:17px;height:18px;background:#1d2088"></div><div class="a" style="left:0px;top:822px;width:1600px;height:1px;background:#d8d8d8"></div><div class="a" style="left:0px;top:823px;width:1600px;height:37px;background:#f4f4f4"></div><div class="t" style="left:8px;top:836px;font-size:12px;color:#111;letter-spacing:-0.42px">( -709.482, -146.368 )</div><svg style="left:130px;top:837px" width="5" height="8" viewBox="0 0 5 8"><path d="M0 0L4.5 4L0 8Z" fill="#111"/></svg><div class="t" style="left:164px;top:836px;font-size:12px;color:#111;">3 <span class="cj" style="width:48px">对象群组</span> <span class="cj" style="width:12px">于</span> <span class="cj" style="width:24px">图层</span> 1</div><svg style="left:1143px;top:833px" width="16" height="16" viewBox="0 0 16 16"><rect x="0.7" y="0.7" width="14.6" height="12" fill="#fff" stroke="#2a1a22" stroke-width="1.4"/><rect x="2" y="2" width="12" height="4.4" fill="#e60012"/><rect x="2" y="7.2" width="12" height="4.2" fill="#2aa6de"/><circle cx="8" cy="6.6" r="1.9" fill="#fff" stroke="#444" stroke-width="0.9"/><path d="M5.4 13.6H10.6" stroke="#222" stroke-width="1.2"/><path d="M2.2 15.3H13.8" stroke="#222" stroke-width="1.3"/></svg><svg style="left:1177px;top:833px" width="17" height="17" viewBox="0 0 17 17"><path d="M7.6 1L14.4 7.9L7.6 14.8L0.9 7.9Z" fill="#fff" stroke="#222" stroke-width="1.3"/><path d="M7.8 0.9L14.6 7.7" stroke="#222" stroke-width="3"/><path d="M3.6 8.6H10.8L7.2 12Z" fill="#d8182c"/><path d="M15.6 10.2V15.6H11.6Z" fill="#d8182c"/></svg><div class="a" style="left:1195px;top:830px;width:20px;height:21.5px;background:#fff;border:1px solid #8c8c8c"></div><svg style="left:1195px;top:830px" width="20" height="22" viewBox="0 0 20 22"><path d="M1 1.2L19 21" stroke="#b01c30" stroke-width="1.7"/></svg>
<div class="a" style="left:0px;top:0px;width:1600px;height:21px;background:#fff"></div><svg style="left:0px;top:0px" width="22" height="20" viewBox="0 0 22 20"><circle cx="11.05" cy="9.9" r="7.9" fill="#9ccf3c" opacity=".75"/><circle cx="11.05" cy="9.9" r="7.35" fill="#0b0b0b"/><path d="M4.2 5.8L7.3 3.4L12.6 8.8L15.1 14.8L9 11.3Z" fill="#fff"/><path d="M6.6 4.6L11.6 9.6M7.6 3.9L12.4 8.8M11.9 9.2L9.6 11.4" stroke="#222" stroke-width="0.6" stroke-dasharray="0.9 0.6" fill="none"/></svg><div class="t" style="left:25px;top:5px;font-size:12px;color:#111;">CorelDRAW 2018 (64-Bit) - <span class="cj" style="width:36px">未命名</span> -1*</div><svg style="left:1487px;top:3px" width="15" height="14" viewBox="0 0 15 14"><rect x="0.7" y="0.7" width="12.6" height="12.6" fill="#fff" stroke="#111" stroke-width="1.4"/><circle cx="6.5" cy="5.5" r="2.2" fill="#111"/><path d="M2.5 12C2.5 9 4.5 8 6.5 8C8.5 8 10.5 9 10.5 12Z" fill="#111"/><circle cx="11.6" cy="2.4" r="3.3" fill="#e8252c"/><path d="M9.6 2.4H13.6" stroke="#fff" stroke-width="1.2"/></svg><div class="a" style="left:1522px;top:12px;width:11px;height:3px;background:#111"></div><svg style="left:1554px;top:3px" width="13" height="13" viewBox="0 0 13 13"><path d="M0.8 0.8H8.2V3.8M0.8 0.8V8.2H3.8" fill="none" stroke="#111" stroke-width="1.6"/><rect x="4.3" y="4.3" width="7.9" height="7.9" fill="#fff" stroke="#111" stroke-width="1.6"/></svg><svg style="left:1582px;top:4px" width="13" height="11" viewBox="0 0 13 11"><path d="M1 0.5L12 10.5M12 0.5L1 10.5" stroke="#111" stroke-width="2.2"/></svg>
<div class="a" style="left:0px;top:21px;width:1600px;height:22px;background:#d9d9d9"></div><div class="t" style="left:9px;top:26px;font-size:12px;color:#111;"><span class="cj" style="width:24px">文件</span>(<u>F</u>)</div><div class="t" style="left:66px;top:26px;font-size:12px;color:#111;"><span class="cj" style="width:24px">编辑</span>(<u>E</u>)</div><div class="t" style="left:123px;top:26px;font-size:12px;color:#111;"><span class="cj" style="width:24px">查看</span>(<u>V</u>)</div><div class="t" style="left:181px;top:26px;font-size:12px;color:#111;"><span class="cj" style="width:24px">布局</span>(<u>L</u>)</div><div class="t" style="left:238px;top:26px;font-size:12px;color:#111;"><span class="cj" style="width:24px">对象</span>(<u>C</u>)</div><div class="t" style="left:297px;top:26px;font-size:12px;color:#111;"><span class="cj" style="width:24px">效果</span>(<u>C</u>)</div><div class="t" style="left:356px;top:26px;font-size:12px;color:#111;"><span class="cj" style="width:24px">位图</span>(<u>B</u>)</div><div class="t" style="left:414px;top:26px;font-size:12px;color:#111;"><span class="cj" style="width:24px">文本</span>(<u>X</u>)</div><div class="t" style="left:472px;top:26px;font-size:12px;color:#111;"><span class="cj" style="width:24px">表格</span>(<u>T</u>)</div><div class="t" style="left:530px;top:26px;font-size:12px;color:#111;"><span class="cj" style="width:24px">工具</span>(<u>O</u>)</div><div class="t" style="left:590px;top:26px;font-size:12px;color:#111;"><span class="cj" style="width:24px">窗口</span>(<u>W</u>)</div><div class="t" style="left:652px;top:26px;font-size:12px;color:#111;"><span class="cj" style="width:24px">帮助</span>(<u>H</u>)</div>
<div class="a" style="left:0px;top:43px;width:1600px;height:33px;background:#f4f4f4"></div><div class="a" style="left:0px;top:74px;width:1600px;height:1px;background:#dadada"></div><svg style="left:8px;top:51px" width="17" height="16" viewBox="0 0 17 16"><path d="M0.65 5L3.6 1.65H10.8V15.35H0.65Z" fill="#f8f8f8" stroke="#333" stroke-width="1.3"/><rect x="9" y="0" width="7.2" height="7" fill="#149a3c"/><path d="M12.6 1.2V5.8M10.3 3.5H14.9" stroke="#fff" stroke-width="1.4"/></svg><svg style="left:37px;top:51px" width="17" height="16" viewBox="0 0 17 16"><path d="M0.2 0.6H5.6L7.2 2.6H13.6V6.2H3L0.2 15.6Z" fill="#333"/><path d="M3 6.6H15.7L13.4 15.3H0.6Z" fill="#f6f6f6" stroke="#333" stroke-width="1.3"/></svg><svg style="left:61px;top:57px" width="8" height="4" viewBox="0 0 8 4"><path d="M0 0H8L4 4.2Z" fill="#111"/></svg><svg style="left:82px;top:51px" width="16" height="16" viewBox="0 0 16 16"><path d="M2.3 0H15.8V15.7H0V2.3Z" fill="#333"/><rect x="4.2" y="2.2" width="8.3" height="4.3" fill="#fff"/><rect x="5.9" y="3" width="1.3" height="2.8" fill="#333"/><circle cx="8.5" cy="9.7" r="1.6" fill="#fff"/></svg><svg style="left:111px;top:51px" width="16" height="16" viewBox="0 0 16 16"><path d="M5.4 9.2V3.2L7.6 0.7H12.4V9.2" fill="#f8f8f8" stroke="#333" stroke-width="1.3"/><path d="M5.4 9.2H0.95V15.1H15.05V9.2H12.4" fill="#fcfcfc" stroke="#333" stroke-width="1.3"/></svg><div class="sep" style="left:138px;top:48px;height:24px;background:#d9d9d9"></div><svg style="left:148px;top:51px" width="17" height="16" viewBox="0 0 17 16"><path d="M0.65 0.95H8.3V6.5H4V10.3H0.65Z" fill="#fafafa" stroke="#333" stroke-width="1.3"/><path d="M2.5 3.2H6.5M2 8.4H3" stroke="#333" stroke-width="1.1"/><path d="M10.4 9.7H15.2" stroke="#333" stroke-width="1.2" stroke-dasharray="1.2 1.2"/><path d="M15.2 9.7V15.2H10.4M10.4 12.5H13.4" fill="none" stroke="#333" stroke-width="1.2"/></svg><svg style="left:177px;top:51px" width="17" height="16" viewBox="0 0 17 16"><rect x="0.65" y="0.95" width="7.9" height="9.6" fill="#fafafa" stroke="#333" stroke-width="1.3"/><path d="M2 3.2H7.2M2 5.7H7.2M2 8.2H7" stroke="#333" stroke-width="1.1"/><rect x="7.6" y="5.6" width="8" height="9.7" fill="#fafafa" stroke="#333" stroke-width="1.3"/><path d="M9.4 8.2H14M9.4 10.6H14M9.4 13H14" stroke="#333" stroke-width="1.1"/></svg><svg style="left:205px;top:51px" width="18" height="16" viewBox="0 0 18 16"><path d="M1.2 1.6H9V10.5H1.2Z" fill="#333"/><rect x="3" y="0.2" width="4.4" height="2" rx="0.8" fill="#333"/><path d="M3.6 1.2H6.8" stroke="#eee" stroke-width="0.9"/><rect x="8.6" y="5.6" width="8.2" height="9.7" fill="#fafafa" stroke="#333" stroke-width="1.3"/><path d="M10.4 8.2H15M10.4 10.6H15M10.4 13H15" stroke="#333" stroke-width="1.1"/></svg><div class="sep" style="left:232px;top:48px;height:24px;background:#d9d9d9"></div><svg style="left:243px;top:51px" width="16" height="16" viewBox="0 0 16 16"><path d="M8 2.3A6.3 6.3 0 1 1 4.2 13.7" fill="none" stroke="#333" stroke-width="1.4"/><path d="M3.2 12.8A6.3 6.3 0 0 1 2 6.6" fill="none" stroke="#333" stroke-width="1.4" stroke-dasharray="1.6 2"/><path d="M4.6 2.6L9 0V5.2Z" fill="#333"/></svg><svg style="left:267px;top:57px" width="8" height="4" viewBox="0 0 8 4"><path d="M0 0H8L4 4.2Z" fill="#111"/></svg><svg style="left:287px;top:51px" width="17" height="16" viewBox="0 0 17 16"><path d="M8 2.4A6.3 6.3 0 0 0 5 14.2" fill="none" stroke="#444" stroke-width="1.4"/><path d="M6.8 14.8A6.3 6.3 0 0 0 14.3 9" fill="none" stroke="#444" stroke-width="1.4" stroke-dasharray="2.2 2"/><path d="M11.8 2.6L7.4 0V5.2Z" fill="#444"/></svg><svg style="left:312px;top:57px" width="8" height="4" viewBox="0 0 8 4"><path d="M0 0H8L4 4.2Z" fill="#111"/></svg><div class="sep" style="left:330px;top:48px;height:24px;background:#d9d9d9"></div><svg style="left:340px;top:50px" width="18" height="18" viewBox="0 0 18 18"><circle cx="9.2" cy="8.8" r="8.6" fill="#e9d8f4"/><circle cx="9.2" cy="8.8" r="7.8" fill="#140c1c"/><path d="M14 4L10.6 7.4M4.4 13.6L7.8 10.2" stroke="#fff" stroke-width="1.7"/><path d="M9.6 4.8V8.4H13.2ZM8.8 12.8V9.2H5.2Z" fill="#fff"/></svg><div class="sep" style="left:367px;top:48px;height:24px;background:#d9d9d9"></div><svg style="left:378px;top:51px" width="17" height="16" viewBox="0 0 17 16"><path d="M6 0.95H0.95V15.05H15.05V0.95H10" fill="#fafafa" stroke="#333" stroke-width="1.3"/><path d="M8 2V11" stroke="#222" stroke-width="1.7"/><path d="M4.6 8.6L8 12.8L11.4 8.6Z" fill="#222"/></svg><svg style="left:407px;top:51px" width="17" height="16" viewBox="0 0 17 16"><path d="M6 0.95H0.95V15.05H15.05V0.95H10" fill="#fafafa" stroke="#333" stroke-width="1.3"/><path d="M8 4V13" stroke="#222" stroke-width="1.7"/><path d="M4.6 6.6L8 2.4L11.4 6.6Z" fill="#222"/></svg><div class="t" style="left:435.5px;top:51px;font-size:8px;color:#333;letter-spacing:0.3px;font-weight:bold;transform:scale(1,0.95)">PDF</div><svg style="left:436px;top:60px" width="8" height="7" viewBox="0 0 8 7"><rect x="0.6" y="0.9" width="5.6" height="5.4" fill="#fff" stroke="#333" stroke-width="1.1"/><path d="M3.4 6V2.6M1.8 4.2L3.4 2.4L5 4.2" stroke="#333" stroke-width="1" fill="none"/></svg><div class="sep" style="left:462px;top:48px;height:24px;background:#d9d9d9"></div><div class="a" style="left:469px;top:47px;width:86px;height:24px;background:#fff;border:1px solid #c2c2c2"></div><div class="a" style="left:536px;top:48px;width:18px;height:22px;background:#ebebeb;border-left:1px solid #d0d0d0"></div><div class="t" style="left:473px;top:53px;font-size:12px;color:#111;">19%</div><svg style="left:542px;top:57px" width="8" height="4" viewBox="0 0 8 4"><path d="M0 0H8L4 4.2Z" fill="#111"/></svg><svg style="left:564px;top:51px" width="17" height="16" viewBox="0 0 17 16"><rect x="2.2" y="2.9" width="11.8" height="9.8" fill="#333"/><path d="M0.65 4V0.95H3.8M12.4 0.95H15.5V4M15.5 11.8V15.05H12.4M3.8 15.05H0.65V11.8" fill="none" stroke="#333" stroke-width="1.3"/></svg><div class="sep" style="left:590px;top:48px;height:24px;background:#d9d9d9"></div><div class="a" style="left:597px;top:47px;width:24px;height:24px;background:#fbfbfb;border:1px solid #bfbfbf"></div><svg style="left:601px;top:51px" width="17" height="16" viewBox="0 0 17 16"><path d="M0.65 0.95H3.6V11.6H15.4V15.05H0.65Z" fill="#fff" stroke="#333" stroke-width="1.3"/><path d="M2.2 3H3.6M2.2 5.2H3.6M2.2 7.4H3.6M2.2 9.6H3.6M5.6 13.4V15M7.8 13.4V15M10 13.4V15M12.2 13.4V15" stroke="#333" stroke-width="1"/><ellipse cx="12" cy="2.5" rx="3.8" ry="2.3" fill="#fff" stroke="#666" stroke-width="1"/><ellipse cx="12" cy="2.5" rx="1.5" ry="1.1" fill="#666"/></svg><svg style="left:630px;top:51px" width="17" height="16" viewBox="0 0 17 16"><rect x="0.3" y="0.3" width="3" height="3" fill="#333"/><rect x="0.3" y="4.1" width="3" height="3" fill="#333"/><rect x="0.3" y="7.9" width="3" height="3" fill="#333"/><rect x="0.3" y="11.7" width="3" height="3" fill="#333"/><rect x="4.3" y="0.3" width="3" height="3" fill="#333"/><rect x="4.3" y="4.1" width="3" height="3" fill="#333"/><rect x="4.3" y="7.9" width="3" height="3" fill="#333"/><rect x="4.3" y="11.7" width="3" height="3" fill="#333"/><rect x="8.3" y="4.1" width="3" height="3" fill="#333"/><rect x="8.3" y="7.9" width="3" height="3" fill="#333"/><rect x="8.3" y="11.7" width="3" height="3" fill="#333"/><rect x="12.3" y="4.1" width="3" height="3" fill="#333"/><rect x="12.3" y="7.9" width="3" height="3" fill="#333"/><rect x="12.3" y="11.7" width="3" height="3" fill="#333"/><ellipse cx="11.8" cy="2.5" rx="3.8" ry="2.3" fill="#fff" stroke="#666" stroke-width="1"/><ellipse cx="11.8" cy="2.5" rx="1.5" ry="1.1" fill="#666"/></svg><div class="a" style="left:655px;top:47px;width:24px;height:24px;background:#fbfbfb;border:1px solid #bfbfbf"></div><svg style="left:659px;top:50px" width="17" height="17" viewBox="0 0 17 17"><path d="M5.5 1V17M0 11.5H16.5" stroke="#333" stroke-width="1.2" stroke-dasharray="1.2 1.3"/><ellipse cx="12.4" cy="3.5" rx="3.8" ry="2.3" fill="#fff" stroke="#666" stroke-width="1"/><ellipse cx="12.4" cy="3.5" rx="1.5" ry="1.1" fill="#666"/></svg><div class="sep" style="left:685px;top:48px;height:24px;background:#d9d9d9"></div><svg style="left:696px;top:51px" width="17" height="16" viewBox="0 0 17 16"><path d="M7 0.95H0.85V15.05H14.8V7.5" fill="#fafafa" stroke="#333" stroke-width="1.3"/><path d="M3.4 7.8L13.4 4.4V13H9.6Z" fill="#222"/><path d="M6.8 7.9L10.4 9.8V6.7Z" fill="#fafafa"/><path d="M9.8 1L15.8 6.6M15.8 1L9.8 6.6" stroke="#e0202c" stroke-width="1.4"/></svg><div class="t" style="left:725px;top:53px;font-size:12px;color:#111;"><span class="cj" style="width:24px">贴齐</span>(<u>T</u>)</div><svg style="left:772.2px;top:57.2px" width="8" height="4" viewBox="0 0 8 4"><path d="M0 0H8L4 4.2Z" fill="#111"/></svg><div class="sep" style="left:790px;top:48px;height:24px;background:#d9d9d9"></div><svg style="left:800px;top:50px" width="18" height="18" viewBox="0 0 18 18"><circle cx="8.9" cy="8.8" r="4.9" fill="none" stroke="#2b2b2b" stroke-width="3"/><circle cx="15.20" cy="8.80" r="1.85" fill="#2b2b2b"/><circle cx="13.35" cy="13.25" r="1.85" fill="#2b2b2b"/><circle cx="8.90" cy="15.10" r="1.85" fill="#2b2b2b"/><circle cx="4.45" cy="13.25" r="1.85" fill="#2b2b2b"/><circle cx="2.60" cy="8.80" r="1.85" fill="#2b2b2b"/><circle cx="4.45" cy="4.35" r="1.85" fill="#2b2b2b"/><circle cx="8.90" cy="2.50" r="1.85" fill="#2b2b2b"/><circle cx="13.35" cy="4.35" r="1.85" fill="#2b2b2b"/></svg><div class="sep" style="left:827px;top:48px;height:24px;background:#d9d9d9"></div><svg style="left:838px;top:51px" width="16" height="16" viewBox="0 0 16 16"><rect x="0.7" y="0.9" width="14.6" height="14.2" fill="#fafafa" stroke="#2b2b2b" stroke-width="1.3"/><rect x="0.7" y="0.9" width="14.6" height="2.8" fill="#2b2b2b"/><path d="M9.6 2.2H14" stroke="#fff" stroke-width="1" stroke-dasharray="1 0.8"/><path d="M3 6.6H9.4M3 8.8H7.6M3 11H6.4" stroke="#2b2b2b" stroke-width="1.1"/></svg><div class="t" style="left:861px;top:53px;font-size:12px;color:#111;"><span class="cj" style="width:24px">启动</span></div><svg style="left:898px;top:57px" width="8" height="4" viewBox="0 0 8 4"><path d="M0 0H8L4 4.2Z" fill="#111"/></svg>
<div class="a" style="left:1389px;top:28px;width:104px;height:25px;background:#d6f0ff;border:1px solid #2f8cd4;border-radius:4px"></div><div class="a" style="left:1389px;top:28px;width:30px;height:25px;background:#2ea0f2;border:1px solid #2f8cd4;border-right:0;border-radius:4px 0 0 4px"></div><svg style="left:1394.4px;top:31.2px" width="20" height="17" viewBox="0 0 20 17"><circle cx="10" cy="5.5" r="3.6" fill="none" stroke="#fff" stroke-width="2.2"/><circle cx="5.2" cy="11.3" r="3.6" fill="none" stroke="#fff" stroke-width="2.2"/><circle cx="14.8" cy="11.3" r="3.6" fill="none" stroke="#fff" stroke-width="2.2"/></svg><svg style="left:1422px;top:35px" width="8" height="10" viewBox="0 0 8 10"><path d="M4 0V7" stroke="#1c8ce0" stroke-width="2"/><path d="M0.3 5L4 9.5L7.7 5Z" fill="#1c8ce0"/></svg><div class="t" style="left:1431.5px;top:34.5px;font-size:12px;color:#fff;font-weight:bold;letter-spacing:-0.25px;opacity:.95">12.7 KB/s</div>
<div class="a" style="left:0px;top:76px;width:1600px;height:41px;background:#f4f4f4"></div><svg style="left:8px;top:89.3px" width="17" height="16" viewBox="-0.5 -0.5 17 16"><rect x="1.5" y="1.5" width="13" height="12.7" fill="none" stroke="#111" stroke-width="1.4"/><rect x="0" y="0" width="3" height="3" fill="#fff" stroke="#111" stroke-width="1"/><rect x="0" y="6.35" width="3" height="3" fill="#fff" stroke="#111" stroke-width="1"/><rect x="0" y="12.7" width="3" height="3" fill="#fff" stroke="#111" stroke-width="1"/><rect x="6.5" y="0" width="3" height="3" fill="#fff" stroke="#111" stroke-width="1"/><rect x="6" y="5.85" width="4" height="4" fill="#111"/><rect x="6.5" y="12.7" width="3" height="3" fill="#fff" stroke="#111" stroke-width="1"/><rect x="13" y="0" width="3" height="3" fill="#fff" stroke="#111" stroke-width="1"/><rect x="13" y="6.35" width="3" height="3" fill="#fff" stroke="#111" stroke-width="1"/><rect x="13" y="12.7" width="3" height="3" fill="#fff" stroke="#111" stroke-width="1"/></svg><div class="t" style="left:35px;top:83.5px;font-size:12px;color:#222;">X:</div><div class="t" style="left:35px;top:99.5px;font-size:12px;color:#222;">Y:</div><div class="a" style="left:47px;top:80px;width:88px;height:17px;background:#fff;border:1px solid #c0c0c0"></div><div class="a" style="left:47px;top:96px;width:88px;height:17px;background:#fff;border:1px solid #c0c0c0"></div><div class="t" style="left:51.5px;top:83px;font-size:12px;color:#111;">-701.982 mm</div><div class="t" style="left:51.5px;top:99px;font-size:12px;color:#111;">-321.199 mm</div><div class="sep" style="left:141px;top:81px;height:31px;background:#d9d9d9"></div><svg style="left:150px;top:86px" width="13" height="6" viewBox="0 0 13 6"><path d="M0.6 0V5.4M12.4 0V5.4M1 2.7H12" stroke="#222" stroke-width="1.2"/><path d="M1.2 2.7L4.4 0.4V5ZM11.8 2.7L8.6 0.4V5Z" fill="#222"/><path d="M6.5 0.8V4.6" stroke="#222" stroke-width="1.3"/></svg><svg style="left:153.8px;top:98.2px" width="5.4" height="12.2" viewBox="0 0 5.4 12.2"><path d="M0 0.6H5.4M0 11.6H5.4M2.7 1V11" stroke="#222" stroke-width="1.2"/><path d="M2.7 1.2L0.4 4.4H5ZM2.7 11L0.4 7.8H5Z" fill="#222"/><path d="M0.8 6.1H4.6" stroke="#222" stroke-width="1.3"/></svg><div class="a" style="left:165px;top:80px;width:88px;height:17px;background:#fff;border:1px solid #c0c0c0"></div><div class="a" style="left:165px;top:96px;width:88px;height:17px;background:#fff;border:1px solid #c0c0c0"></div><div class="t" style="left:168.5px;top:83px;font-size:12px;color:#111;">599.81 mm</div><div class="t" style="left:168.5px;top:99px;font-size:12px;color:#111;">599.813 mm</div><div class="a" style="left:258px;top:80px;width:43px;height:17px;background:#fff;border:1px solid #c0c0c0"></div><div class="a" style="left:258px;top:96px;width:43px;height:17px;background:#fff;border:1px solid #c0c0c0"></div><div class="t" style="left:261.5px;top:83px;font-size:12px;color:#111;">100.0</div><div class="t" style="left:261.5px;top:99px;font-size:12px;color:#111;">100.0</div><div class="t" style="left:304px;top:82.5px;font-size:12px;color:#222;transform:scaleX(.82);transform-origin:0 0">%</div><div class="t" style="left:304px;top:98.5px;font-size:12px;color:#222;transform:scaleX(.82);transform-origin:0 0">%</div><svg style="left:323px;top:91px" width="12" height="13" viewBox="0 0 12 13"><rect x="0.8" y="6.7" width="10" height="5.2" fill="#111"/><path d="M1.5 6.7V3.2A2.6 2.6 0 0 1 6.6 3.2V4.2" fill="none" stroke="#111" stroke-width="1.1"/><rect x="4.9" y="8.4" width="1.8" height="1.8" fill="#fff"/></svg><div class="sep" style="left:344.5px;top:81px;height:31px;background:#d9d9d9"></div><svg style="left:355px;top:89px" width="16" height="16" viewBox="0 0 16 16"><path d="M1.65 8.6A6.45 6.45 0 1 1 4 13" fill="none" stroke="#333" stroke-width="1.2"/><path d="M0 6.2L4.4 6.8L1.6 10.4Z" fill="#333"/></svg><div class="a" style="left:373px;top:85px;width:50px;height:24px;background:#fff;border:1px solid #c0c0c0"></div><div class="t" style="left:377px;top:91px;font-size:12px;color:#111;">270.0</div><svg style="left:432.5px;top:89px" width="10" height="10" viewBox="0 0 10 10"><circle cx="4.9" cy="4.7" r="3.9" fill="none" stroke="#333" stroke-width="1.2"/></svg><div class="sep" style="left:451px;top:81px;height:31px;background:#d9d9d9"></div><svg style="left:462px;top:88px" width="16" height="17" viewBox="0 0 16 17"><path d="M7.5 0.5V16.6" stroke="#222" stroke-width="1" stroke-dasharray="2.4 1.6"/><path d="M0.75 4.9H3V9.6H5.6V12.3H0.75Z" fill="#fff" stroke="#222" stroke-width="1.2"/><path d="M14.6 4.9H12.2V9.6H9.8V12.3H14.6Z" fill="#1f9ad6" stroke="#17527a" stroke-width="1.1"/></svg><svg style="left:491px;top:88px" width="17" height="17" viewBox="0 0 17 17"><path d="M0 9.5H16.4" stroke="#222" stroke-width="1" stroke-dasharray="2.4 1.6"/><path d="M4.2 2.9H12.6V5.4H7V7.8H4.2Z" fill="#fff" stroke="#222" stroke-width="1.2"/><path d="M4.2 15.8H12.6V13.4H7V11H4.2Z" fill="#1f9ad6" stroke="#17527a" stroke-width="1.1"/></svg><div class="sep" style="left:517px;top:81px;height:31px;background:#d9d9d9"></div><svg style="left:530px;top:89px" width="9" height="16" viewBox="0 0 9 16"><path d="M4.5 0.4C3 2.5 0.9 5.2 0.7 7.4L2.4 11.2H6.6L8.3 7.4C8.1 5.2 6 2.5 4.5 0.4Z" fill="#fff" stroke="#333" stroke-width="1.1"/><path d="M4.5 2V7.6" stroke="#333" stroke-width="1"/><rect x="2.6" y="11.7" width="3.9" height="3.6" fill="#fff" stroke="#333" stroke-width="1.1"/></svg><div class="a" style="left:546px;top:85px;width:80px;height:24px;background:#fff;border:1px solid #c0c0c0"></div><div class="a" style="left:607px;top:86px;width:18px;height:22px;background:#ebebeb;border-left:1px solid #d0d0d0"></div><div class="t" style="left:550.5px;top:91.4px;font-size:12px;color:#111;letter-spacing:0.3px">.2 mm</div><svg style="left:613px;top:95.4px" width="8" height="4" viewBox="0 0 8 4"><path d="M0 0H8L4 4.2Z" fill="#111"/></svg><div class="sep" style="left:632.5px;top:81px;height:31px;background:#d9d9d9"></div><svg style="left:643px;top:89px" width="17" height="17" viewBox="0 0 17 17"><path d="M0.5 0.5H16M0.5 15.6H16" stroke="#333" stroke-width="1" stroke-dasharray="1 6.75"/><path d="M0.5 0.5V15.6M16 0.5V15.6" stroke="#333" stroke-width="1" stroke-dasharray="1 6.55"/><rect x="2.9" y="6.5" width="5" height="5" fill="#fff" stroke="#222" stroke-width="1.1"/><rect x="5.2" y="8.9" width="5" height="5" fill="#fff" stroke="#222" stroke-width="1.1"/><path d="M9.6 0L16 7M16 0L9.6 7" stroke="#e0202c" stroke-width="1.3"/></svg><svg style="left:672px;top:89px" width="17" height="17" viewBox="0 0 17 17"><path d="M0.5 0.5H16M0.5 15.6H16" stroke="#333" stroke-width="1" stroke-dasharray="1 6.75"/><path d="M0.5 0.5V15.6M16 0.5V15.6" stroke="#333" stroke-width="1" stroke-dasharray="1 6.55"/><rect x="2.7" y="6.2" width="3.2" height="3.2" fill="#fff" stroke="#222" stroke-width="1.1"/><rect x="5.2" y="8.6" width="3.2" height="3.2" fill="#fff" stroke="#222" stroke-width="1.1"/><rect x="7.7" y="11" width="3.2" height="3.2" fill="#fff" stroke="#222" stroke-width="1.1"/><path d="M9.2 0L15.8 7M15.8 0L9.2 7" stroke="#e0202c" stroke-width="1.3"/></svg><div class="sep" style="left:698px;top:81px;height:31px;background:#d9d9d9"></div><svg style="left:709px;top:88px" width="20" height="20" viewBox="0 0 20 20"><path d="M0.2 1.1H16M0.2 3.8H16M0.2 6.5H8M0.2 9.2H8M0.2 12.2H16M0.2 15.4H16" stroke="#222" stroke-width="1.1"/><circle cx="12" cy="8.4" r="3.7" fill="#d2eafa" stroke="#3a8fd0" stroke-width="1.1"/><path d="M19 15.6V19.5H15.2Z" fill="#111"/></svg><div class="sep" style="left:735px;top:81px;height:31px;background:#d9d9d9"></div><svg style="left:745.8px;top:88.6px" width="17" height="17" viewBox="0 0 17 17"><path d="M0.7 0.7H6.8V8.3H3L0.7 6Z" fill="#fafafa" stroke="#e8862c" stroke-width="1.2"/><rect x="6.1" y="5.7" width="6.2" height="5.9" fill="#fafafa" stroke="#222" stroke-width="1.2"/><rect x="10" y="9.5" width="6.2" height="6.2" fill="#fafafa" stroke="#222" stroke-width="1.2"/><path d="M12 11.5L14.5 12.2L13.8 14Z" fill="#222"/></svg><svg style="left:774.8px;top:88.6px" width="17" height="17" viewBox="0 0 17 17"><path d="M0.7 0.7H6.8V8.3H3L0.7 6Z" fill="#fafafa" stroke="#222" stroke-width="1.2"/><rect x="6.1" y="5.7" width="6.2" height="5.9" fill="#fafafa" stroke="#222" stroke-width="1.2"/><rect x="10" y="9.5" width="6.2" height="6.2" fill="#fafafa" stroke="#e8862c" stroke-width="1.2"/><path d="M12 11.5L14.5 12.2L13.8 14Z" fill="#e8862c"/></svg><div class="sep" style="left:801px;top:81px;height:31px;background:#d9d9d9"></div><svg style="left:816px;top:88px" width="19" height="19" viewBox="0 0 19 19"><circle cx="9.1" cy="9" r="8.1" fill="none" stroke="#c8c8c8" stroke-width="1.3"/><path d="M9.1 4V14M4.1 9H14.1" stroke="#c8c8c8" stroke-width="2"/></svg>
<div class="a" style="left:32px;top:117px;width:1548px;height:20px;background:#eaeaea;border-top:1px solid #dedede"></div><div class="a" style="left:32px;top:136px;width:1548px;height:1px;background:#9fd2f0"></div><div class="a" style="left:32px;top:137px;width:1548px;height:1px;background:#2c9cdc"></div><div class="a" style="left:32px;top:117px;width:90px;height:19px;background:#dedede"></div><svg style="left:33px;top:120px" width="15" height="15" viewBox="0 0 15 15"><path d="M7.4 0.3L0.2 7.2H2.3V14.6H5.9V9.6H8.9V14.6H12.5V7.2H14.6Z" fill="#2a2a2a"/></svg><div class="t" style="left:56px;top:122px;font-size:12px;color:#111;"><span class="cj" style="width:48px">欢迎屏幕</span></div><div class="a" style="left:122.5px;top:117px;width:80.5px;height:19px;background:#cfe5f8"></div><div class="t" style="left:127px;top:122px;font-size:12px;color:#111;"><span class="cj" style="width:36px">未命名</span> -1*</div><div class="a" style="left:203px;top:117px;width:18.5px;height:19px;background:#dcdcdc"></div><svg style="left:207px;top:121.6px" width="11.4" height="11.4" viewBox="0 0 11.4 11.4"><path d="M5.7 0V11.4M0 5.7H11.4" stroke="#c0c0c0" stroke-width="2"/></svg><svg style="left:36px;top:142px" width="10" height="10" viewBox="0 0 10 10"><path d="M2.5 0V10M0 2.5H10" stroke="#777" stroke-width="1" stroke-dasharray="1 1"/><path d="M2.5 2.5L8 8" stroke="#555" stroke-width="1.1"/><rect x="7.3" y="7.3" width="1.6" height="1.6" fill="#444"/></svg>
<div class="a" style="left:1212px;top:732px;width:380px;height:120px;background:#fff;box-shadow:0 1px 9px rgba(0,0,0,.2)"></div><div class="t" style="left:1223.5px;top:742px;font-size:12px;color:#a0a0a0;">360<span class="cj" style="width:24px">日历</span></div><svg style="left:1570px;top:742px" width="12" height="12" viewBox="0 0 12 12"><path d="M0.5 0.5L11.5 11.5M11.5 0.5L0.5 11.5" stroke="#8c8c8c" stroke-width="1.2"/></svg><div class="t" style="left:1236px;top:784px;font-size:17px;color:#222;font-weight:bold"><span class="cj" style="width:119px">预计曾都明天有</span><span class="cj" style="width:17px">「</span><span class="cj" style="width:17px">雨</span><span class="cj" style="width:17px">」</span><span class="cj" style="width:119px">出行记得带伞</span></div><div class="t" style="left:1236px;top:811.5px;font-size:15px;color:#3c3c3c;word-spacing:1.5px;letter-spacing:0"><span class="cj" style="width:30px">小雨</span> 24~34<span class="cj" style="width:15px">℃</span> <span class="cj" style="width:60px">东风微风</span></div><div class="a" style="left:1590px;top:792px;width:12px;height:59px;background:#3a4048;border-radius:2px"></div><div class="a" style="left:1593px;top:795px;width:4px;height:54px;background:#1e2228"></div><svg style="left:1590px;top:792px" width="10" height="59" viewBox="0 0 10 59"><rect x="4" y="18" width="2" height="1" fill="#d8c83c"/><rect x="4" y="20" width="2" height="1" fill="#d8c83c"/><rect x="4" y="22" width="2" height="1" fill="#d8c83c"/><rect x="4" y="24" width="2" height="1" fill="#d8c83c"/><rect x="4" y="26" width="2" height="1" fill="#d8c83c"/><rect x="4" y="28" width="2" height="1" fill="#d8c83c"/><rect x="4" y="30" width="2" height="1" fill="#3aa0e0"/><rect x="4" y="32" width="2" height="1" fill="#3aa0e0"/><rect x="4" y="34" width="2" height="1" fill="#3aa0e0"/><rect x="4" y="36" width="2" height="1" fill="#3aa0e0"/><rect x="4" y="38" width="2" height="1" fill="#3aa0e0"/><rect x="4" y="40" width="2" height="1" fill="#3aa0e0"/><rect x="4" y="42" width="2" height="1" fill="#3aa0e0"/><rect x="4" y="44" width="2" height="1" fill="#3aa0e0"/><rect x="4" y="46" width="2" height="1" fill="#3aa0e0"/><rect x="4" y="48" width="2" height="1" fill="#3aa0e0"/><rect x="4" y="50" width="2" height="1" fill="#3aa0e0"/><rect x="4" y="52" width="2" height="1" fill="#3aa0e0"/><rect x="4" y="54" width="2" height="1" fill="#3aa0e0"/></svg>
</body></html>
